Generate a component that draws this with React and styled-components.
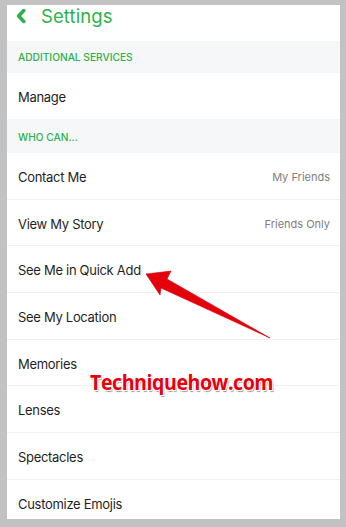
import React from "react";
import styled, { createGlobalStyle } from "styled-components";

const Global = createGlobalStyle`
  html, body { margin: 0; padding: 0; background: #c2c2c2; }
  body { font-family: Inter, "Noto Sans", sans-serif; -webkit-font-smoothing: antialiased; }
`;

const Page = styled.div`
  width: 346px;
  height: 527px;
  box-sizing: border-box;
  padding: 5px 6px 8px 7px;
  background: #c2c2c2;
  overflow: hidden;
`;

const Frame = styled.div`
  position: relative;
  height: 514px;
  background: #ffffff;
  overflow: hidden;
  display: flex;
  flex-direction: column;
`;

const Header = styled.div`
  height: 36px;
  flex: none;
  box-sizing: border-box;
  display: flex;
  align-items: center;
  gap: 14px;
  padding: 0 0 15px 8px;
  color: #2db24b;
`;

const Title = styled.span`
  font-size: 18.5px;
  font-weight: 400;
  letter-spacing: 0.1px;
`;

const Chevron = styled.svg`
  width: 12px;
  height: 16px;
`;

const SectionHead = styled.div`
  height: ${(p) => p.$h}px;
  flex: none;
  box-sizing: border-box;
  background: #f6f7f9;
  display: flex;
  align-items: center;
  padding: ${(p) => p.$pt || 0}px 0 0 11px;
  font-size: 10.2px;
  font-weight: 500;
  color: #2db24b;
`;

const Row = styled.div`
  height: ${(p) => p.$h}px;
  flex: none;
  box-sizing: border-box;
  display: flex;
  align-items: center;
  justify-content: space-between;
  padding: 2px 10px 0 11px;
  border-bottom: ${(p) => (p.$line ? "1px solid #eff0f2" : "none")};
`;

const Label = styled.span`
  font-size: 13px;
  color: #1f1f1f;
  letter-spacing: -0.3px;
`;

const Value = styled.span`
  font-size: 11px;
  color: #808080;
`;

const Arrow = styled.svg`
  position: absolute;
  left: 0;
  top: 0;
  width: 333px;
  height: 514px;
  pointer-events: none;
`;

const Watermark = styled.div`
  position: absolute;
  left: 83px;
  top: 361px;
  font-family: "Open Sans", sans-serif;
  font-weight: 700;
  font-size: 22px;
  letter-spacing: -0.5px;
  transform: scaleX(0.89);
  transform-origin: left top;
  color: #e8000b;
  text-shadow: -1px -1px 0 #fff, 1px -1px 0 #fff, -1px 1px 0 #fff, 1px 1px 0 #fff,
    1.5px 1.5px 1px #9a9a9a;
  pointer-events: none;
  white-space: nowrap;
`;

const rows = [
  { label: "Contact Me", value: "My Friends" },
  { label: "View My Story", value: "Friends Only" },
  { label: "See Me in Quick Add" },
  { label: "See My Location" },
  { label: "Memories" },
  { label: "Lenses" },
  { label: "Spectacles" },
  { label: "Customize Emojis", last: true },
];

export default function App() {
  return (
    <>
      <Global />
      <Page>
        <Frame>
          <Header>
            <Chevron viewBox="0 0 12 16">
              <path d="M8.8 2.6 L3.6 8 L8.8 13.4" fill="none" stroke="#2db24b" strokeWidth="3.6" strokeLinecap="round" strokeLinejoin="round" />
            </Chevron>
            <Title>Settings</Title>
          </Header>
          <SectionHead $h={32}>ADDITIONAL SERVICES</SectionHead>
          <Row $h={46}>
            <Label>Manage</Label>
          </Row>
          <SectionHead $h={34} $pt={2}>WHO CAN...</SectionHead>
          {rows.map((r) => (
            <Row key={r.label} $h={46.7} $line={!r.last}>
              <Label>{r.label}</Label>
              {r.value && <Value>{r.value}</Value>}
            </Row>
          ))}
          <Arrow viewBox="0 0 333 514">
            <polygon
              points="139,269 164,266 160,274 263,333 154,283 153,290"
              fill="#e3000a"
              stroke="#d00008"
              strokeWidth="0.6"
              strokeLinejoin="round"
            />
          </Arrow>
          <Watermark>Techniquehow.com</Watermark>
        </Frame>
      </Page>
    </>
  );
}
